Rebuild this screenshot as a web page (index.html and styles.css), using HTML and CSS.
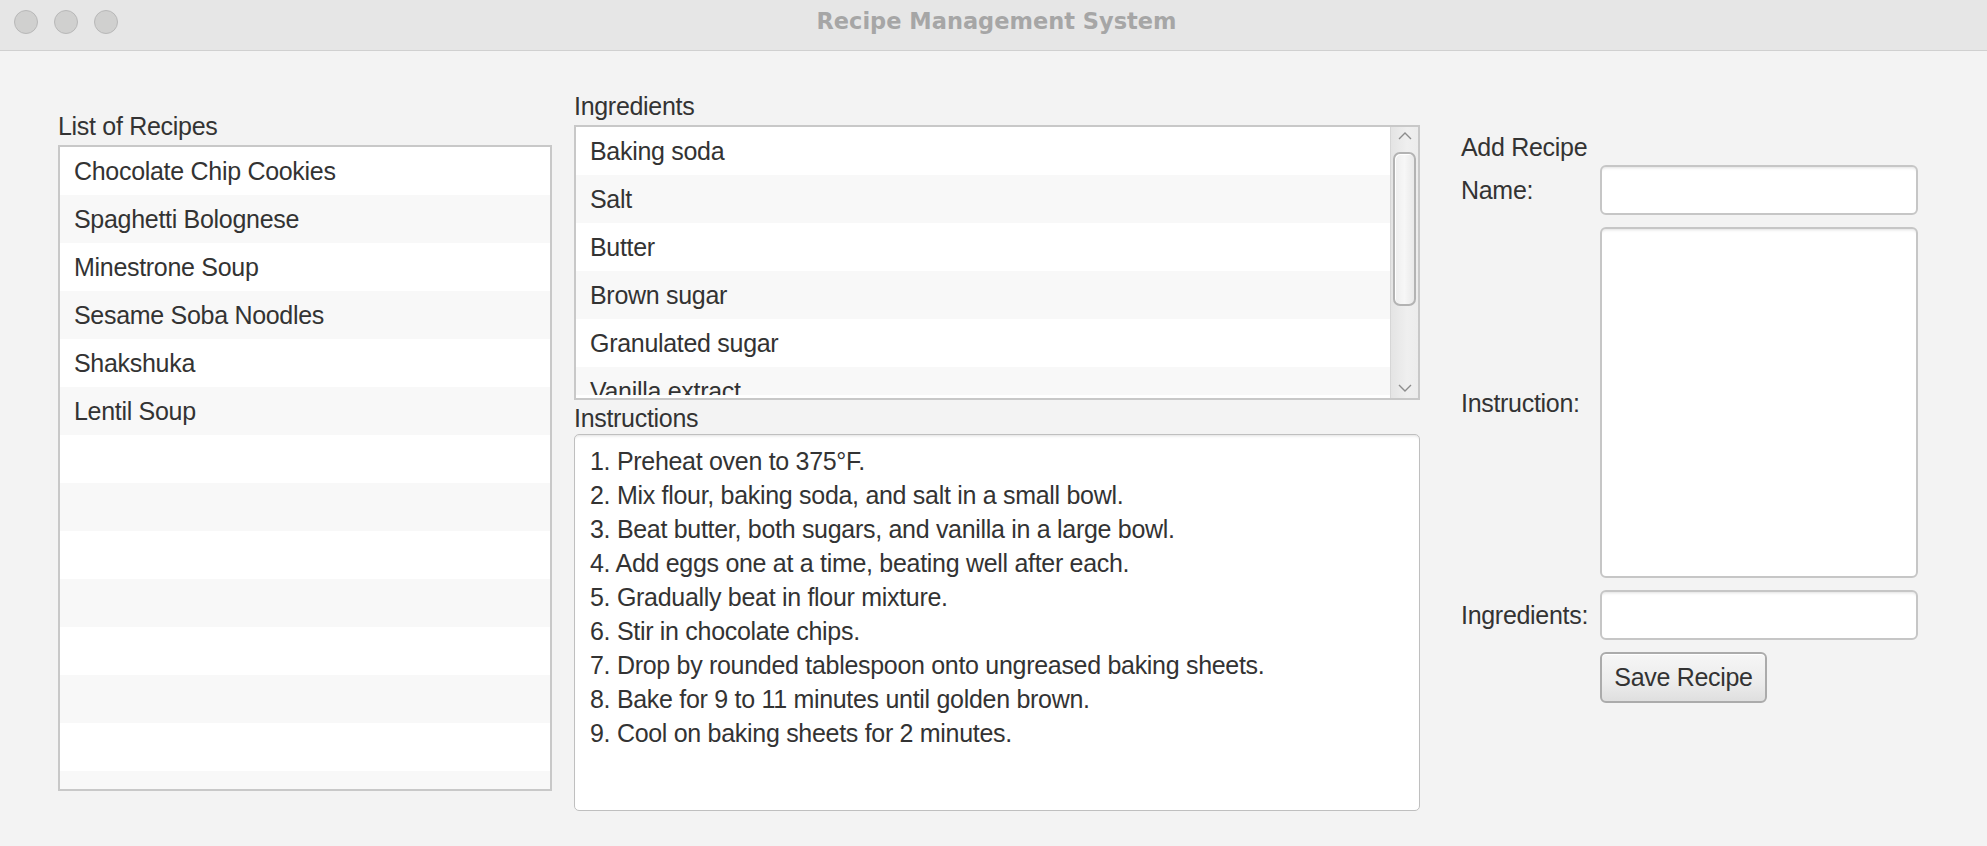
FILE: index.html
```html
<!DOCTYPE html>
<html lang="en">
<head>
<meta charset="utf-8">
<title>Recipe Management System</title>
<link rel="stylesheet" href="styles.css">
</head>
<body>
<div class="window">
  <header class="titlebar">
    <div class="lights">
      <span class="light"></span>
      <span class="light"></span>
      <span class="light"></span>
    </div>
    <div class="title">Recipe Management System</div>
    <div class="spacer"></div>
  </header>
  <main class="content">
    <section class="col col-recipes">
      <div class="label">List of Recipes</div>
      <ul class="list list-recipes">
        <li>Chocolate Chip Cookies</li>
        <li>Spaghetti Bolognese</li>
        <li>Minestrone Soup</li>
        <li>Sesame Soba Noodles</li>
        <li>Shakshuka</li>
        <li>Lentil Soup</li>
        <li></li><li></li><li></li><li></li><li></li><li></li><li></li><li></li>
      </ul>
    </section>
    <section class="col col-details">
      <div class="label">Ingredients</div>
      <div class="scroll-box">
        <ul class="list list-ingredients">
          <li>Baking soda</li>
          <li>Salt</li>
          <li>Butter</li>
          <li>Brown sugar</li>
          <li>Granulated sugar</li>
          <li class="partial">Vanilla extract</li>
        </ul>
        <div class="scrollbar">
          <div class="arrow arrow-up">
            <svg width="14" height="8" viewBox="0 0 14 8"><polyline points="1,7 7,1 13,7" fill="none" stroke="#8c8c8c" stroke-width="1.4"/></svg>
          </div>
          <div class="thumb"></div>
          <div class="arrow arrow-down">
            <svg width="14" height="8" viewBox="0 0 14 8"><polyline points="1,1 7,7 13,1" fill="none" stroke="#8c8c8c" stroke-width="1.4"/></svg>
          </div>
        </div>
      </div>
      <div class="label label-instructions">Instructions</div>
      <div class="textarea">
        <div class="line">1. Preheat oven to 375°F.</div>
        <div class="line">2. Mix flour, baking soda, and salt in a small bowl.</div>
        <div class="line">3. Beat butter, both sugars, and vanilla in a large bowl.</div>
        <div class="line">4. Add eggs one at a time, beating well after each.</div>
        <div class="line">5. Gradually beat in flour mixture.</div>
        <div class="line">6. Stir in chocolate chips.</div>
        <div class="line">7. Drop by rounded tablespoon onto ungreased baking sheets.</div>
        <div class="line">8. Bake for 9 to 11 minutes until golden brown.</div>
        <div class="line">9. Cool on baking sheets for 2 minutes.</div>
      </div>
    </section>
    <section class="col col-form">
      <div class="form-title">Add Recipe</div>
      <div class="form-grid">
        <label class="form-label">Name:</label>
        <div class="field field-line"></div>
        <label class="form-label">Instruction:</label>
        <div class="field field-area"></div>
        <label class="form-label">Ingredients:</label>
        <div class="field field-line"></div>
        <span class="form-empty"></span>
        <div class="btn-row"><button class="btn">Save Recipe</button></div>
      </div>
    </section>
  </main>
</div>
</body>
</html>
```

FILE: styles.css
```css
* { box-sizing: border-box; }

html, body {
  margin: 0;
  padding: 0;
  background: #f3f3f3;
  height: 100%;
  overflow: hidden;
}

body {
  font-family: "Liberation Sans", Arial, sans-serif;
  font-size: 25px;
  letter-spacing: -0.3px;
  color: #333333;
}

.window {
  width: 1987px;
  height: 846px;
  background: #f3f3f3;
}

/* ---------- title bar ---------- */
.titlebar {
  height: 51px;
  background: #e6e6e6;
  border-bottom: 1px solid #d0d0d0;
  display: grid;
  grid-template-columns: 1fr auto 1fr;
  align-items: start;
}

.lights {
  display: flex;
  gap: 16px;
  padding-left: 14px;
  padding-top: 10px;
}

.light {
  width: 24px;
  height: 24px;
  border-radius: 50%;
  background: #d0d0cf;
  border: 1px solid #b8b8b8;
}

.title {
  font-family: "DejaVu Sans", "Liberation Sans", sans-serif;
  font-weight: bold;
  font-size: 22.5px;
  letter-spacing: 0;
  line-height: 26px;
  padding-top: 8px;
  padding-left: 6px;
  color: #a6a6a6;
  white-space: nowrap;
}

/* ---------- content ---------- */
.content {
  display: flex;
  align-items: flex-start;
  padding-left: 58px;
}

.label {
  line-height: 30px;
  height: 30px;
  margin-bottom: 4px;
  white-space: nowrap;
}

.col-recipes {
  width: 494px;
  margin-top: 60px;
}

.col-details {
  width: 846px;
  margin-left: 22px;
  margin-top: 40px;
}

.col-form {
  margin-left: 41px;
  margin-top: 81px;
}

.list {
  list-style: none;
  margin: 0;
  padding: 0;
  background: #ffffff;
  overflow: hidden;
}

.list li {
  height: 48px;
  line-height: 48px;
  padding-left: 14px;
  white-space: nowrap;
  background: #ffffff;
}

.list li:nth-child(even) {
  background: #f8f8f8;
}

.list li.partial {
  height: 28px;
  overflow: hidden;
}

.list-recipes {
  height: 646px;
  border: 2px solid #c8c8c8;
}

/* ---------- ingredients ---------- */
.scroll-box {
  height: 275px;
  border: 2px solid #c8c8c8;
  display: flex;
  background: #ffffff;
}

.list-ingredients {
  flex: 1;
  height: 100%;
}

.scrollbar {
  width: 28px;
  height: 100%;
  border-left: 1px solid #d6d6d6;
  background: linear-gradient(to right, #e4e4e4, #efefef 60%, #ececec);
  display: flex;
  flex-direction: column;
  align-items: center;
}

.arrow {
  display: flex;
  align-items: center;
  justify-content: center;
  width: 100%;
}

.arrow-up { height: 18px; }

.arrow-down {
  height: 20px;
  margin-top: auto;
}

.thumb {
  margin-top: 7px;
  width: 23px;
  height: 154px;
  border: 2px solid #b3b3b3;
  border-radius: 7px;
  background: linear-gradient(to right, #eeeeee, #f7f7f7 50%, #e9e9e9);
  box-shadow: inset 1px 1px 0 #ffffff;
}

.label-instructions {
  margin-top: 3px;
  margin-bottom: 1px;
}

.textarea {
  height: 377px;
  background: #ffffff;
  border: 1px solid #bfbfbf;
  border-radius: 5px;
  box-shadow: inset 0 3px 3px -2px rgba(0, 0, 0, 0.12);
  padding: 9px 15px 7px;
}

.line {
  line-height: 34px;
  white-space: nowrap;
}

/* ---------- form ---------- */
.form-title {
  line-height: 30px;
  height: 30px;
  margin-bottom: 3px;
}

.form-grid {
  display: grid;
  grid-template-columns: 129px 318px;
  grid-template-rows: 50px 351px 50px 51px;
  column-gap: 10px;
  row-gap: 12px;
}

.form-label {
  align-self: center;
  line-height: 30px;
  white-space: nowrap;
}

.field {
  background: #ffffff;
  border: 2px solid #c6c6c6;
  border-radius: 6px;
  box-shadow: inset 0 4px 3px -3px rgba(0, 0, 0, 0.12);
}

.btn-row {
  display: flex;
}

.btn {
  font-family: inherit;
  font-size: 25px;
  letter-spacing: -0.3px;
  color: #333333;
  height: 51px;
  width: 167px;
  padding: 0;
  border: 2px solid #ababab;
  border-radius: 6px;
  background: linear-gradient(to bottom, #f6f6f6, #ececec 60%, #dfdfdf);
  box-shadow: inset 0 1px 0 #ffffff;
}
```
